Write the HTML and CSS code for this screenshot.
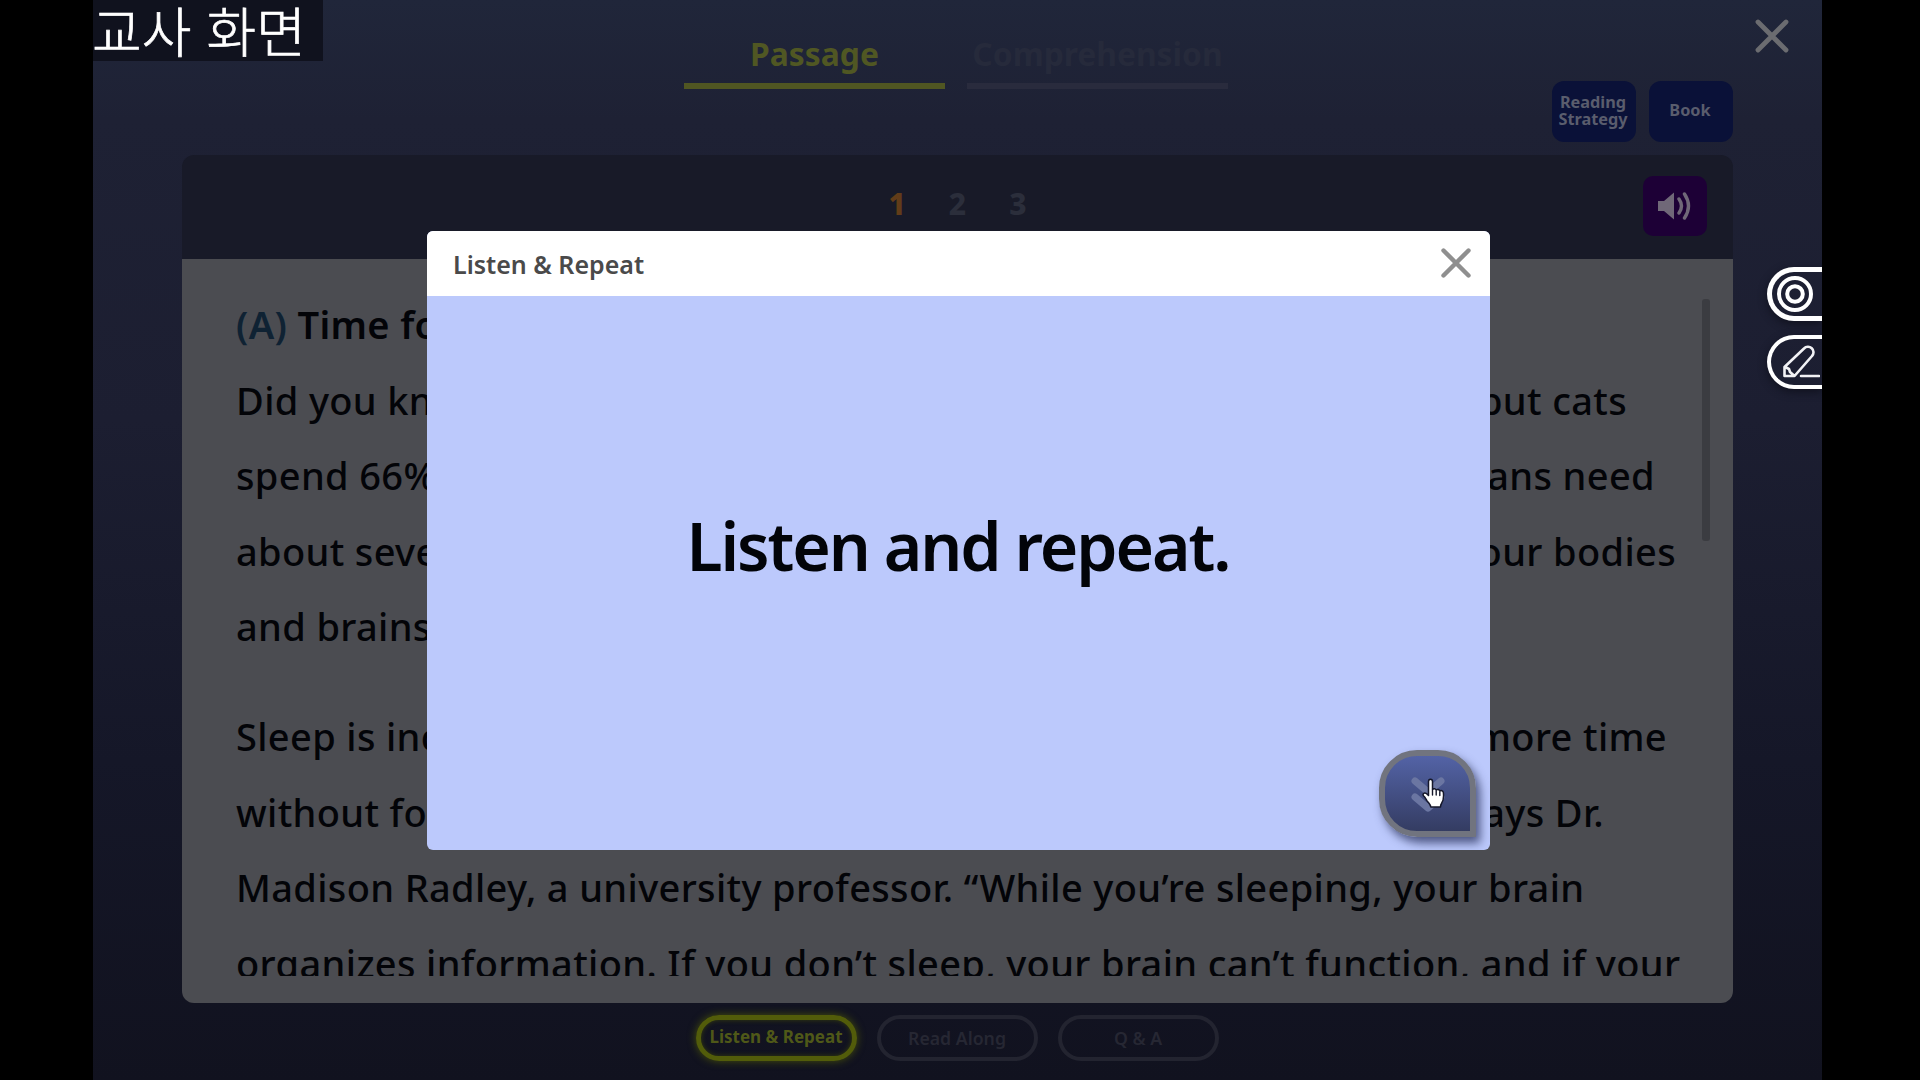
FILE: index.html
```html
<!DOCTYPE html>
<html lang="ko">
<head>
<meta charset="utf-8">
<title>Listen &amp; Repeat</title>
<link rel="stylesheet" href="styles.css">
</head>
<body>
<div class="stage">
  <header class="top">
    <nav class="tabs">
      <span class="tab active">Passage</span>
      <span class="tab">Comprehension</span>
    </nav>
    <div class="actions">
      <span class="action">Reading<br>Strategy</span>
      <span class="action">Book</span>
    </div>
  </header>
  <main class="panel">
    <div class="panel-head">
      <div class="pages"><span class="current">1</span><span>2</span><span>3</span></div>
      <div class="sound">
        <svg width="36" height="32" viewBox="0 0 36 32"><path d="M1 11h6l10-8.500v27L7 21H1z" fill="#706878"/><path d="M22 9q5 7 0 14M27.500 4q8 12 0 24" fill="none" stroke="#706878" stroke-width="3.400" stroke-linecap="round"/></svg>
      </div>
    </div>
    <div class="panel-body">
      <div class="text">
        <div class="line title"><span><b>(A)</b> Time for</span></div>
        <div class="line" style="width:1391px"><span>Did you kno</span><span>but cats</span></div>
        <div class="line" style="width:1419px"><span>spend 66%</span><span>humans need</span></div>
        <div class="line" style="width:1440px"><span>about seven</span><span>our bodies</span></div>
        <div class="line gap"><span>and brains</span></div>
        <div class="line" style="width:1431px"><span>Sleep is inc</span><span>more time</span></div>
        <div class="line" style="width:1368px"><span>without foo</span><span>says Dr.</span></div>
        <div class="line"><span>Madison Radley, a university professor. “While you’re sleeping, your brain</span></div>
        <div class="line"><span>organizes information. If you don’t sleep, your brain can’t function, and if your</span></div>
      </div>
      <div class="scrollbar"></div>
    </div>
  </main>
  <footer class="modes">
    <span class="mode active">Listen &amp; Repeat</span>
    <span class="mode">Read Along</span>
    <span class="mode">Q &amp; A</span>
  </footer>

  <svg class="close" width="34" height="34" viewBox="0 0 34 34"><path d="M3 3l28 28M31 3L3 31" stroke="#6b6c70" stroke-width="4.800" stroke-linecap="round"/></svg>
  <div class="label">교사 화면</div>

  <div class="tools">
    <div class="tool target">
      <svg width="36" height="36" viewBox="0 0 36 36" fill="none" stroke="#fff"><circle cx="18" cy="18" r="16" stroke-width="4"/><circle cx="18" cy="18" r="7.800" stroke-width="4"/></svg>
    </div>
    <div class="tool pen">
      <svg width="38" height="34" viewBox="0 0 38 34" fill="none" stroke="#f2f2f5" stroke-width="2.600" stroke-linejoin="round" stroke-linecap="round"><path d="M2.500 31V22L22 3.500a5.400 5.400 0 0 1 8 7.500L12.500 31zM3 22l4 2 1 3 4 3.500M19 31h18"/></svg>
    </div>
  </div>

  <section class="modal">
    <div class="modal-head">
      <span>Listen &amp; Repeat</span>
      <svg width="32" height="32" viewBox="0 0 32 32"><path d="M3.500 3.500l25 25M28.500 3.500l-25 25" stroke="#8f8f8f" stroke-width="4.400" stroke-linecap="round"/></svg>
    </div>
    <div class="modal-body">Listen and repeat.</div>
    <div class="next">
      <svg width="36" height="38" viewBox="0 0 36 38" fill="none" stroke="#6b76a2" stroke-width="7" stroke-linecap="round" stroke-linejoin="round"><path d="M5 6l13 11L31 6M5 22l13 11 13-11"/></svg>
    </div>
    <svg class="cursor" width="24" height="32" viewBox="0 0 24 32"><path d="M6.500 3.500c0-3 4-3 4 0v8c.8-1.300 3.300-1 3.700.7.800-1.200 3.200-.8 3.600.9 1-1 3.400-.4 3.600 1.600.4 4 .2 8-1.900 10.800-.7 1-1 2-1 3.500H8.800c-.3-2.500-2.200-4-3.700-6.200-1.200-1.900-2-3.600-3.600-5-1.300-1.800.7-3.600 2.600-2.500l2.400 2.200z" fill="#fff" stroke="#15172a" stroke-width="1.500" stroke-linejoin="round"/><path d="M10.500 12v5M14.200 13v4M17.800 14v3.500" stroke="#15172a" stroke-width="1.400" stroke-linecap="round"/></svg>
  </section>
</div>
</body>
</html>
```
FILE: styles.css
```css
* { box-sizing: border-box; }
html, body { margin: 0; height: 100%; background: #000; overflow: hidden; }
body { font-family: "Noto Sans", "Noto Sans CJK KR", sans-serif; }

.stage {
  position: relative;
  width: 1729px;
  height: 1080px;
  margin-left: 93px;
  padding: 0 89px;
  overflow: hidden;
  display: flex;
  flex-direction: column;
  background: linear-gradient(#20263a 0, #1e2134 120px, #1c1e31 420px, #151728 760px, #11121f 1080px);
}

.top { height: 155px; flex: none; display: grid; grid-template-columns: 502px 544px 1fr; }
.tabs { grid-column: 2; display: flex; justify-content: space-between; height: 89px; }
.tab {
  width: 261px;
  border-bottom: 6px solid #292b3d;
  padding-top: 32px;
  text-align: center;
  font-weight: 700;
  font-size: 31.800px;
  line-height: 44px;
  color: #262a3b;
}
.tab.active { color: #505723; border-color: #505622; }
.actions { display: flex; gap: 13px; justify-content: flex-end; padding-top: 81px; }
.action {
  width: 84px;
  height: 61px;
  padding: 0 2px 1px 0;
  border-radius: 12px;
  background: #0a1138;
  color: #5a5d6d;
  font-weight: 700;
  font-size: 16.300px;
  line-height: 17.500px;
  text-align: center;
  display: flex;
  align-items: center;
  justify-content: center;
}

.panel { height: 848px; flex: none; border-radius: 12px; overflow: hidden; display: flex; flex-direction: column; }
.panel-head {
  height: 104px;
  flex: none;
  background: #181a28;
  display: grid;
  grid-template-columns: 1fr 150px 1fr;
}
.pages {
  grid-column: 2;
  display: flex;
  justify-content: space-between;
  padding: 28px 6px 0 6px;
  font-weight: 800;
  font-size: 30px;
  line-height: 41px;
  color: #2b2e3b;
}
.pages .current { color: #613c19; }
.sound {
  justify-self: end;
  width: 64px;
  height: 60px;
  margin: 21px 26px 0 0;
  border-radius: 10px;
  background: #1d0036;
  display: flex;
  align-items: center;
  justify-content: center;
}
.panel-body {
  flex: 1;
  min-height: 0;
  background: #4b4c51;
  display: flex;
  justify-content: space-between;
  padding: 28px 23px 27px 54px;
}
.text {
  width: 1450px;
  overflow: hidden;
  color: #030408;
  font-weight: 500;
  font-size: 38px;
  line-height: 75.600px;
  letter-spacing: 0.350px;
}
.line { display: flex; justify-content: space-between; white-space: nowrap; }
.title { font-weight: 600; }
.title b { font-weight: 600; color: #0f2233; }
.gap { margin-bottom: 34px; }
.scrollbar { width: 8px; height: 242px; margin-top: 12px; border-radius: 3px; background: #3b3c41; }

.modes { display: flex; justify-content: center; gap: 20px; padding: 12px 1px 0 0; }
.mode {
  width: 161px;
  height: 46px;
  border: 4px solid #232430;
  border-radius: 23px;
  text-align: center;
  font-weight: 600;
  font-size: 17.700px;
  line-height: 38px;
  color: #262733;
}
.mode.active {
  font-weight: 700;
  font-size: 17px;
  line-height: 34px;
  border: 5px solid #525c0a;
  color: #4f5818;
  box-shadow: 0 0 8px #47500a, inset 0 0 5px #363d0c;
}

.close { position: absolute; left: 1662px; top: 19px; }
.label {
  position: absolute;
  left: 0;
  top: 0;
  width: 230px;
  height: 61px;
  background: #10121e;
  color: #fff;
  font-family: "Noto Sans CJK KR", sans-serif;
  font-weight: 300;
  font-size: 54px;
  line-height: 59px;
  text-indent: -1px;
  -webkit-text-stroke: 0.700px #fff;
  white-space: nowrap;
}

.tools { position: absolute; right: 0; top: 267px; display: flex; flex-direction: column; gap: 14px; }
.tool {
  width: 55px;
  height: 54px;
  border: 4px solid #fff;
  border-right: 0;
  border-radius: 27px 0 0 27px;
  display: flex;
  align-items: center;
  box-shadow: 0 3px 8px #11121f;
}
.target { border-width: 5px 0 5px 5px; padding-left: 5px; }
.pen { padding-left: 11px; }

.modal {
  position: absolute;
  left: 334px;
  top: 231px;
  width: 1063px;
  height: 619px;
  border-radius: 6px;
  overflow: hidden;
  background: #bcc9fc;
  display: flex;
  flex-direction: column;
}
.modal-head {
  height: 65px;
  flex: none;
  padding: 0 18px 0 26px;
  background: #fff;
  color: #4a4a4a;
  display: flex;
  align-items: center;
  justify-content: space-between;
  font-weight: 600;
  font-size: 25px;
}
.modal-head svg { margin-bottom: 1px; }
.modal-body {
  flex: 1;
  display: flex;
  align-items: center;
  justify-content: center;
  padding: 0 1px 57px 0;
  font-weight: 600;
  font-size: 66px;
  letter-spacing: -2.100px;
  color: #020409;
}
.next {
  position: absolute;
  right: 14px;
  bottom: 13px;
  width: 97px;
  height: 87px;
  border: 6px solid #71747f;
  border-radius: 38px 38px 0 38px;
  background: linear-gradient(#5363a6, #343c62);
  box-shadow: 4px 6px 10px rgba(40, 48, 90, 0.75);
  display: flex;
  align-items: center;
  justify-content: center;
}
.cursor { position: absolute; left: 995px; top: 547px; }
```
